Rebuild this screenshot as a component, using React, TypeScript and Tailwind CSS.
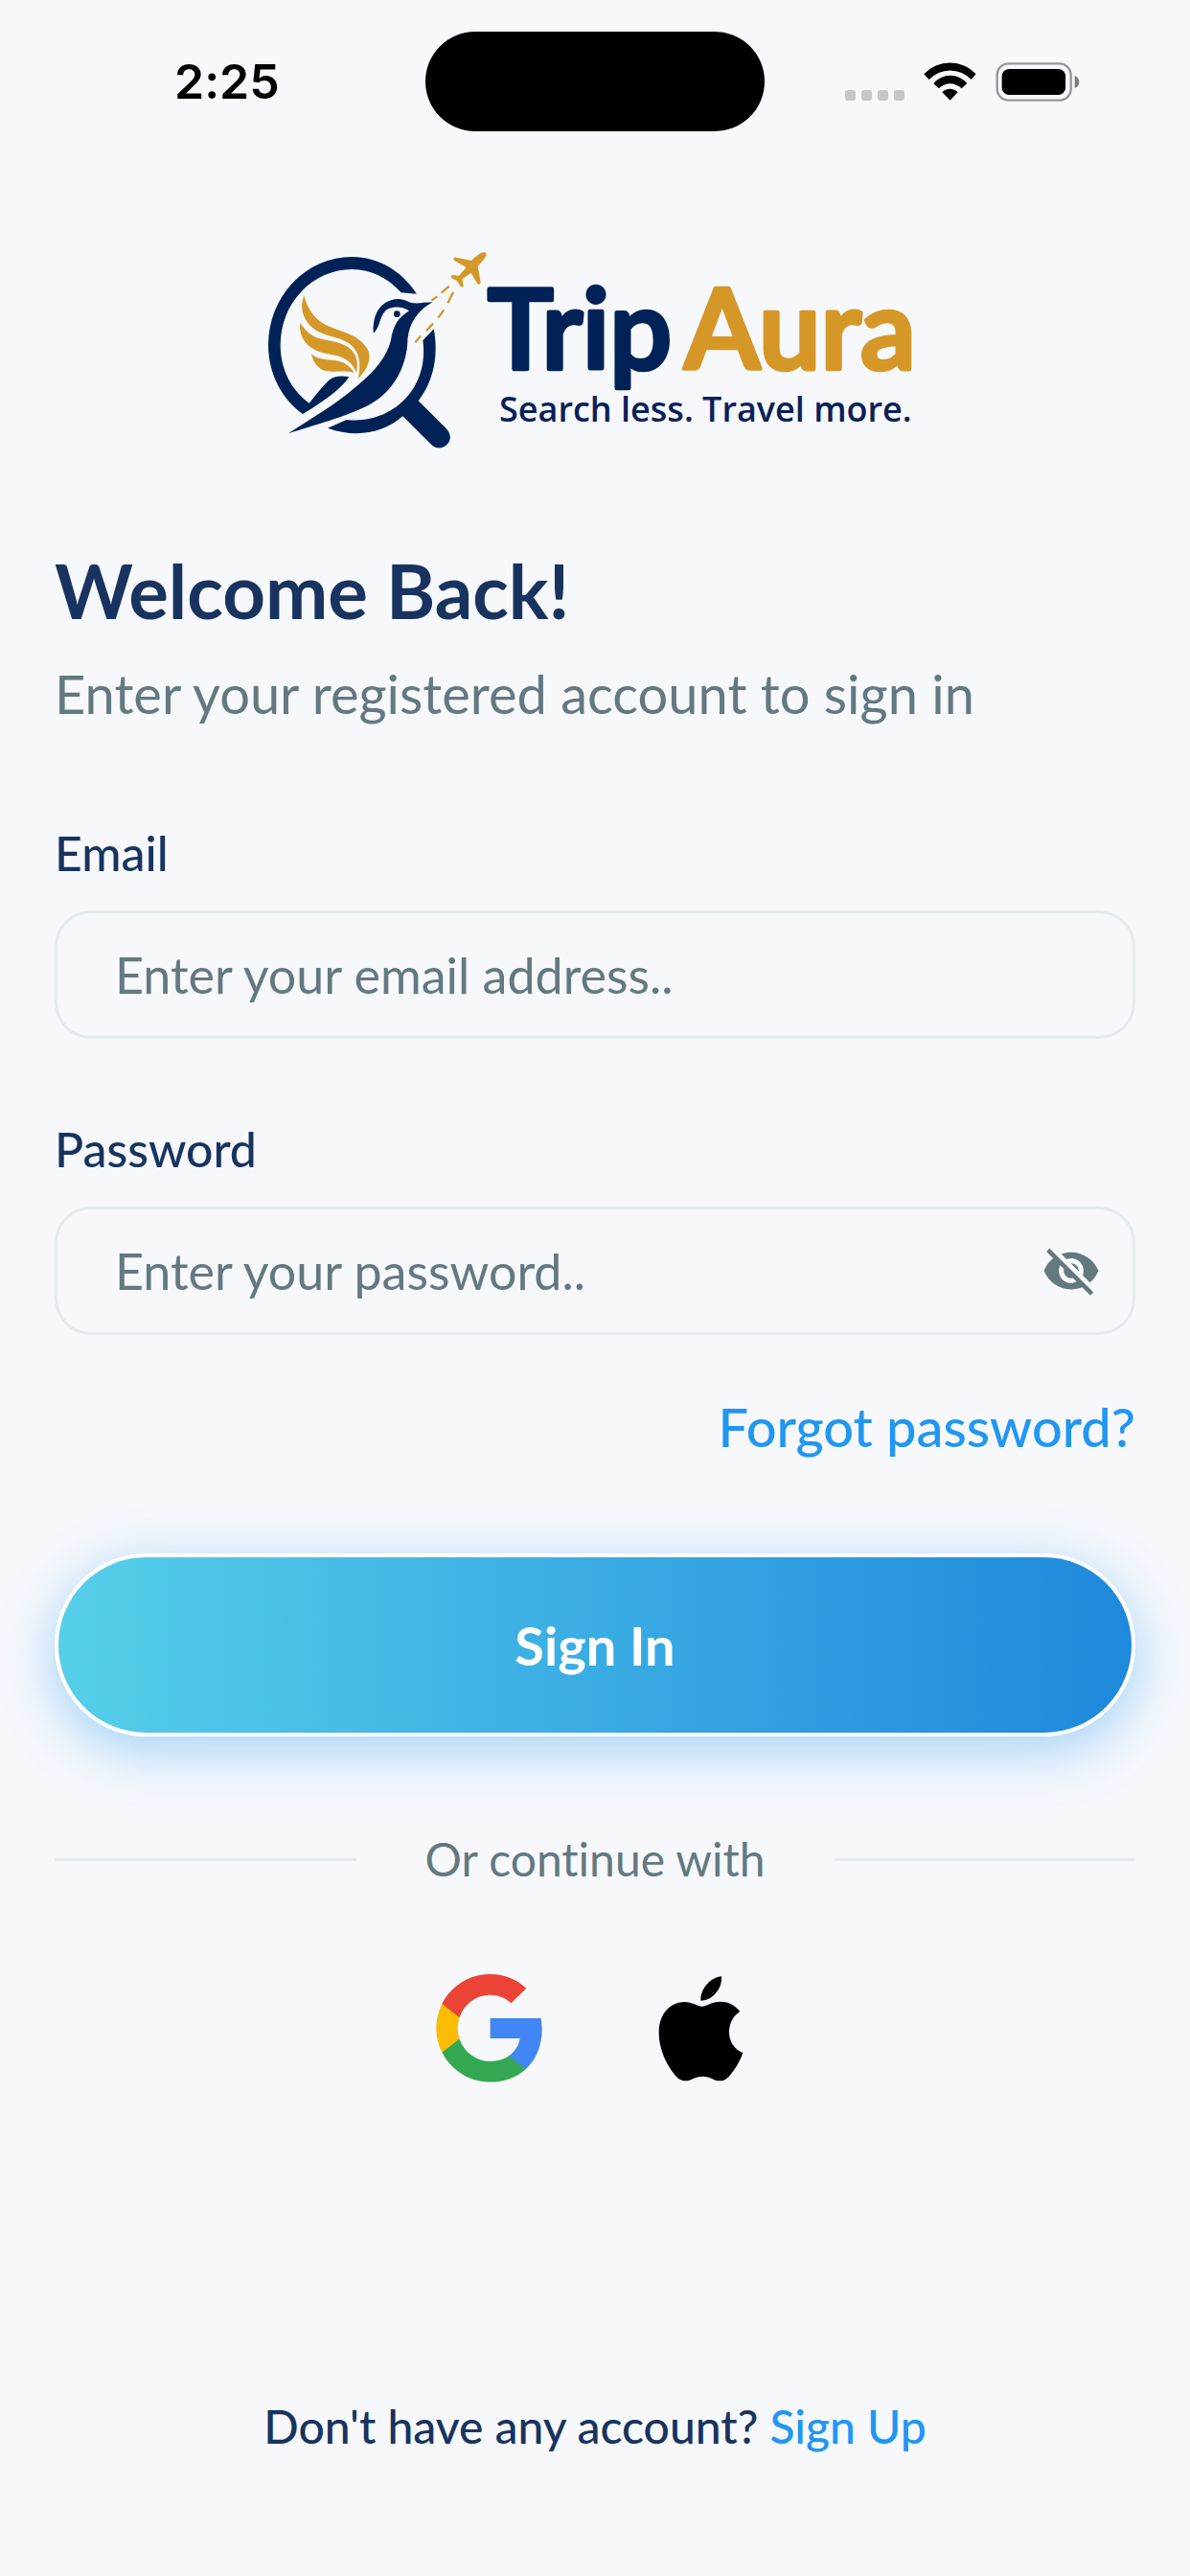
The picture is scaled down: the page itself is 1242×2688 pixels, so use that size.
import React, { useState } from "react";
import { MdVisibility, MdVisibilityOff } from "react-icons/md";

function StatusBar() {
  return (
    <header className="grid h-[170px] grid-cols-3 items-center">
      <time className="pl-[182px] font-['Inter',sans-serif] text-[50px] leading-none font-semibold text-black">
        2:25
      </time>
      <div className="h-[104px] w-[354px] justify-self-center rounded-full bg-black" />
      <div className="flex items-center justify-end gap-5 pr-[115px]">
        <div className="mt-7 flex gap-[6px]">
          <span className="size-[11px] rounded-[3px] bg-[#c5c6ca]" />
          <span className="size-[11px] rounded-[3px] bg-[#c5c6ca]" />
          <span className="size-[11px] rounded-[3px] bg-[#c5c6ca]" />
          <span className="size-[11px] rounded-[3px] bg-[#c5c6ca]" />
        </div>
        <svg viewBox="311 73 165 120" className="h-10 w-[55px]" aria-hidden="true">
          <path d="M312 110A111 111 0 0 1 475 110L460 127A90 90 0 0 0 328 127Z" />
          <path d="M342 139A68 68 0 0 1 447 139L430 155A51 51 0 0 0 358 155Z" />
          <path d="M369 167A33 33 0 0 1 418 167L394 192Z" />
        </svg>
        <svg viewBox="539 72 264 124" className="h-[41px] w-[88px]" aria-hidden="true">
          <rect x="543" y="76" width="233" height="116" rx="36" fill="none" stroke="#96979b" strokeWidth="7" />
          <rect x="558" y="93" width="201" height="82" rx="23" />
          <path d="M788 114Q802 120 802 134Q802 148 788 154Z" fill="#7c7d80" />
        </svg>
      </div>
    </header>
  );
}

function Logo() {
  return (
    <svg
      viewBox="0 0 2160 720"
      className="mx-auto mt-[70px] h-[240px] w-[720px]"
      role="img"
      aria-label="TripAura. Search less. Travel more."
    >
      <g fill="#002257">
        <path d="M522 200C475 128 402 84 319 84A262 276 0 0 0 57 360C57 450 100 530 165 576C225 540 282 502 310 460C285 455 262 458 247 470C225 490 205 518 185 542C128 500 95 435 95 360A224 237 0 0 1 319 123C380 123 432 150 473 196Z" />
        <path d="M575 310C590 385 578 470 527 535L614 621C630 638 631 658 616 672C602 686 580 685 567 671L478 583C412 640 325 650 243 620L302 594C440 610 562 500 541 346Z" />
        <path d="M386 321C384 270 402 219 465 216C487 216 495 228 512 229C532 230 550 226 572 226C528 250 496 290 493 350C490 420 455 500 380 543C320 578 220 605 120 637C190 590 270 545 330 492C395 440 428 395 441 345C448 300 462 276 498 253C482 241 455 237 432 247C405 262 410 300 389 321Z" />
        <circle cx="460" cy="263" r="10" />
      </g>
      <g fill="#d59727">
        <path d="M169 205C180 250 205 285 250 303C300 322 342 332 366 370C385 402 365 440 338 466C348 420 345 382 310 355C270 328 215 335 180 290C160 262 158 235 169 205Z" />
        <path d="M157 290C175 320 195 335 230 343C275 352 308 357 326 387C338 407 337 430 333 448C325 420 300 400 270 393C235 385 195 382 172 350C158 330 154 310 157 290Z" />
        <path d="M192 388C205 400 225 406 255 407C290 408 315 425 326 447C300 438 270 446 240 442C215 438 197 415 192 388Z" />
        <path d="M739 71C743 82 732 92 713 113L722 164C720 172 713 172 710 166L692 134L664 154L668 175C666 181 661 180 659 176L649 160L631 151C626 146 630 141 635 141L654 143L677 117L640 96C634 90 638 85 646 86L693 96C712 77 728 66 739 71Z" />
      </g>
      <path
        d="M568 221L586 208M599 197L623 176M636 194L619 229M607 250L589 275M573 293L552 315M534 332L517 352"
        stroke="#d59727"
        strokeWidth="7"
        fill="none"
      />
      <g className="font-['Lato',sans-serif]" strokeLinejoin="round" strokeLinecap="round">
        <text x="744" y="436" fontSize="345" fontWeight="600" fill="#002257" stroke="#002257" strokeWidth="14">
          Trip
        </text>
        <text x="1360" y="436" fontSize="345" fontWeight="600" fill="#d59727" stroke="#d59727" strokeWidth="14">
          Aura
        </text>
      </g>
      <text
        x="780"
        y="600"
        fontSize="108"
        fontWeight="600"
        fill="#0a2058"
        className="font-['Open_Sans',sans-serif]"
      >
        Search less. Travel more.
      </text>
    </svg>
  );
}

function GoogleIcon() {
  return (
    <svg viewBox="0 0 256 262" className="h-[113px] w-[111px]" aria-hidden="true">
      <path fill="#4285F4" d="M255.878 133.451c0-10.734-.871-18.567-2.756-26.69H130.55v48.448h71.947c-1.45 12.04-9.283 30.172-26.69 42.356l-.244 1.622 38.755 30.023 2.685.268c24.659-22.774 38.875-56.282 38.875-96.027" />
      <path fill="#34A853" d="M130.55 261.1c35.248 0 64.839-11.605 86.453-31.622l-41.196-31.913c-11.024 7.688-25.82 13.055-45.257 13.055-34.523 0-63.824-22.773-74.269-54.25l-1.531.13-40.298 31.187-.527 1.465C35.393 231.798 79.49 261.1 130.55 261.1" />
      <path fill="#FBBC05" d="M56.281 156.37c-2.756-8.123-4.351-16.827-4.351-25.82 0-8.994 1.595-17.697 4.206-25.82l-.073-1.73L15.26 71.312l-1.335.635C5.077 89.644 0 109.517 0 130.55s5.077 40.905 13.925 58.602l42.356-32.782" />
      <path fill="#EB4335" d="M130.55 50.479c24.514 0 41.05 10.589 50.479 19.438l36.844-35.974C195.245 12.91 165.798 0 130.55 0 79.49 0 35.393 29.301 13.925 71.947l42.211 32.783c10.59-31.477 39.891-54.251 74.414-54.251" />
    </svg>
  );
}

function AppleIcon() {
  return (
    <svg viewBox="828 121 333 339" className="h-[113px] w-[111px]" aria-hidden="true">
      <path d="M998 222C1010 222 1030 207 1056 207C1085 207 1105 222 1117 238C1095 252 1083 275 1083 302C1083 335 1102 358 1126 367C1118 392 1105 413 1090 432C1078 448 1068 455 1053 455C1035 455 1025 441 1000 441C975 441 965 455 946 455C930 455 920 446 908 430C882 396 863 350 863 305C863 240 903 208 943 208C968 208 985 222 998 222Z" />
      <path d="M1059 128C1061 150 1052 170 1038 184C1024 198 1010 204 994 204C993 184 1002 164 1016 150C1028 137 1044 129 1059 128Z" />
    </svg>
  );
}

const label = "block text-[50px] leading-[64px] font-medium text-[#18335f]";
const field =
  "mt-7 h-[134px] w-full rounded-[38px] border-3 border-[#e4ebee] bg-transparent pl-[60px] text-[52px] text-[#18335f] outline-none placeholder:text-[#647880] placeholder:opacity-100";

export default function App() {
  const [visible, setVisible] = useState(false);
  const Eye = visible ? MdVisibility : MdVisibilityOff;

  return (
    <div className="flex min-h-screen flex-col bg-[#f6f8fc] font-['Lato',sans-serif] [font-variant-ligatures:none]">
      <StatusBar />
      <Logo />
      <main className="flex grow flex-col px-[57px] pb-[124px]">
        <h1 className="mt-[88px] text-[78px] leading-[96px] font-bold text-[#18335f]">Welcome Back!</h1>
        <p className="mt-7 text-[56px] leading-[64px] text-[#647880]">Enter your registered account to sign in</p>

        <form onSubmit={(e) => e.preventDefault()}>
          <label htmlFor="email" className={`${label} mt-[102px]`}>
            Email
          </label>
          <input id="email" type="email" placeholder="Enter your email address.." className={`${field} pr-[60px]`} />

          <label htmlFor="password" className={`${label} mt-[83px]`}>
            Password
          </label>
          <div className="relative">
            <input
              id="password"
              type={visible ? "text" : "password"}
              placeholder="Enter your password.."
              className={`${field} pr-[130px]`}
            />
            <button
              type="button"
              aria-label="Toggle password visibility"
              onClick={() => setVisible(!visible)}
              className="absolute right-9 bottom-9 text-[#647880]"
            >
              <Eye className="size-[62px]" />
            </button>
          </div>

          <div className="mt-16 flex justify-end">
            <a href="#forgot" className="text-[56px] leading-[64px] font-medium text-[#2196f3]">
              Forgot password?
            </a>
          </div>

          <button
            type="submit"
            className="mt-[100px] block h-[191px] w-full rounded-full border-4 border-white bg-linear-to-r from-[#56cfe9] to-[#1e88db] bg-origin-border text-[56px] font-bold text-white shadow-[0_14px_56px_rgba(33,150,243,0.4)]"
          >
            Sign In
          </button>
        </form>

        <div className="mt-24 flex items-center gap-[72px]">
          <span className="h-[3px] grow bg-[#e4ebee]" />
          <span className="text-[48px] leading-[64px] text-[#647880]">Or continue with</span>
          <span className="h-[3px] grow bg-[#e4ebee]" />
        </div>

        <div className="mt-[88px] flex justify-center gap-[110px]">
          <button type="button" aria-label="Continue with Google">
            <GoogleIcon />
          </button>
          <button type="button" aria-label="Continue with Apple">
            <AppleIcon />
          </button>
        </div>

        <p className="mt-auto text-center text-[48px] leading-[64px] font-medium text-[#18335f]">
          Don't have any account?{" "}
          <a href="#signup" className="text-[#2196f3]">
            Sign Up
          </a>
        </p>
      </main>
    </div>
  );
}
